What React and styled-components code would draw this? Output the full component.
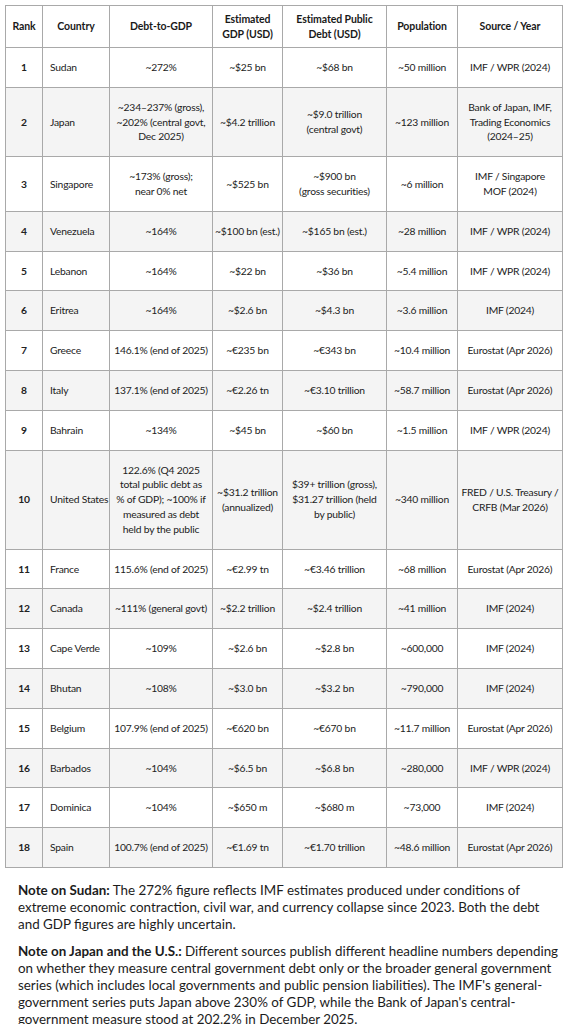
import React from "react";
import styled, { createGlobalStyle } from "styled-components";

const Global = createGlobalStyle`
  html, body { margin: 0; padding: 0; background: #ffffff; }
  body { font-family: Lato, "Open Sans", Arial, sans-serif; color: #1f1f1f; }
`;

const Page = styled.div`
  padding: 5px 7px 0 5px;
  width: 557px;
`;

const Table = styled.table`
  width: 557px;
  border-collapse: collapse;
  table-layout: fixed;
  font-size: 10.3px;
  line-height: 14.8px;
  letter-spacing: -0.2px;
  border: 1px solid #a9a9a9;
`;

const HeadCell = styled.th`
  border: 1px solid #a9a9a9;
  padding: 6px 2px;
  font-weight: 700;
  font-size: 10.5px;
  line-height: 14.5px;
  letter-spacing: -0.1px;
  text-align: center;
  vertical-align: middle;
  background: #ffffff;
  color: #1a1a1a;
  white-space: pre-line;
`;

const Row = styled.tr`
  background: ${(p) => (p.$striped ? "#f4f4f4" : "#ffffff")};
`;

const Cell = styled.td`
  border: 1px solid #a9a9a9;
  padding: 12px 2px;
  text-align: ${(p) => (p.$left ? "left" : "center")};
  padding-left: ${(p) => (p.$left ? "7px" : "2px")};
  padding-right: ${(p) => (p.$left ? "0" : "2px")};
  font-weight: ${(p) => (p.$bold ? 700 : 400)};
  vertical-align: middle;
  color: #222;
  white-space: ${(p) => (p.$left ? "nowrap" : "pre-line")};
`;

const Notes = styled.div`
  padding: 14px 0 0 13px;
  font-size: 13.4px;
  line-height: 17px;
  color: #1c1c1c;
  white-space: nowrap;
`;

const Note = styled.p`
  margin: 0 0 10px;
`;

const Strong = styled.strong`
  font-weight: 700;
`;

const widths = [37, 67, 103, 70, 104, 71, 105];
const headers = [
  "Rank",
  "Country",
  "Debt-to-GDP",
  "Estimated\nGDP (USD)",
  "Estimated Public\nDebt (USD)",
  "Population",
  "Source / Year",
];

const rows = [
  ["1", "Sudan", "~272%", "~$25 bn", "~$68 bn", "~50 million", "IMF / WPR (2024)"],
  ["2", "Japan", "~234–237% (gross),\n~202% (central govt,\nDec 2025)", "~$4.2 trillion", "~$9.0 trillion\n(central govt)", "~123 million", "Bank of Japan, IMF,\nTrading Economics\n(2024–25)"],
  ["3", "Singapore", "~173% (gross);\nnear 0% net", "~$525 bn", "~$900 bn\n(gross securities)", "~6 million", "IMF / Singapore\nMOF (2024)"],
  ["4", "Venezuela", "~164%", "~$100 bn (est.)", "~$165 bn (est.)", "~28 million", "IMF / WPR (2024)"],
  ["5", "Lebanon", "~164%", "~$22 bn", "~$36 bn", "~5.4 million", "IMF / WPR (2024)"],
  ["6", "Eritrea", "~164%", "~$2.6 bn", "~$4.3 bn", "~3.6 million", "IMF (2024)"],
  ["7", "Greece", "146.1% (end of 2025)", "~€235 bn", "~€343 bn", "~10.4 million", "Eurostat (Apr 2026)"],
  ["8", "Italy", "137.1% (end of 2025)", "~€2.26 tn", "~€3.10 trillion", "~58.7 million", "Eurostat (Apr 2026)"],
  ["9", "Bahrain", "~134%", "~$45 bn", "~$60 bn", "~1.5 million", "IMF / WPR (2024)"],
  ["10", "United States", "122.6% (Q4 2025\ntotal public debt as\n% of GDP); ~100% if\nmeasured as debt\nheld by the public", "~$31.2 trillion\n(annualized)", "$39+ trillion (gross),\n$31.27 trillion (held\nby public)", "~340 million", "FRED / U.S. Treasury /\nCRFB (Mar 2026)"],
  ["11", "France", "115.6% (end of 2025)", "~€2.99 tn", "~€3.46 trillion", "~68 million", "Eurostat (Apr 2026)"],
  ["12", "Canada", "~111% (general govt)", "~$2.2 trillion", "~$2.4 trillion", "~41 million", "IMF (2024)"],
  ["13", "Cape Verde", "~109%", "~$2.6 bn", "~$2.8 bn", "~600,000", "IMF (2024)"],
  ["14", "Bhutan", "~108%", "~$3.0 bn", "~$3.2 bn", "~790,000", "IMF (2024)"],
  ["15", "Belgium", "107.9% (end of 2025)", "~€620 bn", "~€670 bn", "~11.7 million", "Eurostat (Apr 2026)"],
  ["16", "Barbados", "~104%", "~$6.5 bn", "~$6.8 bn", "~280,000", "IMF / WPR (2024)"],
  ["17", "Dominica", "~104%", "~$650 m", "~$680 m", "~73,000", "IMF (2024)"],
  ["18", "Spain", "100.7% (end of 2025)", "~€1.69 tn", "~€1.70 trillion", "~48.6 million", "Eurostat (Apr 2026)"],
];

export default function App() {
  return (
    <Page>
      <Global />
      <Table>
        <colgroup>
          {widths.map((w, i) => (
            <col key={i} style={{ width: w }} />
          ))}
        </colgroup>
        <thead>
          <tr>
            {headers.map((h) => (
              <HeadCell key={h}>{h}</HeadCell>
            ))}
          </tr>
        </thead>
        <tbody>
          {rows.map((r, i) => (
            <Row key={r[0]} $striped={i % 2 === 1}>
              {r.map((c, j) => (
                <Cell key={j} $left={j === 1} $bold={j === 0}>
                  {c}
                </Cell>
              ))}
            </Row>
          ))}
        </tbody>
      </Table>
      <Notes>
        <Note>
          <Strong>Note on Sudan:</Strong> The 272% figure reflects IMF estimates produced under conditions of
          <br />
          extreme economic contraction, civil war, and currency collapse since 2023. Both the debt
          <br />
          and GDP figures are highly uncertain.
        </Note>
        <Note>
          <Strong>Note on Japan and the U.S.:</Strong> Different sources publish different headline numbers depending
          <br />
          on whether they measure central government debt only or the broader general government
          <br />
          series (which includes local governments and public pension liabilities). The IMF's general-
          <br />
          government series puts Japan above 230% of GDP, while the Bank of Japan's central-
          <br />
          government measure stood at 202.2% in December 2025.
        </Note>
      </Notes>
    </Page>
  );
}
